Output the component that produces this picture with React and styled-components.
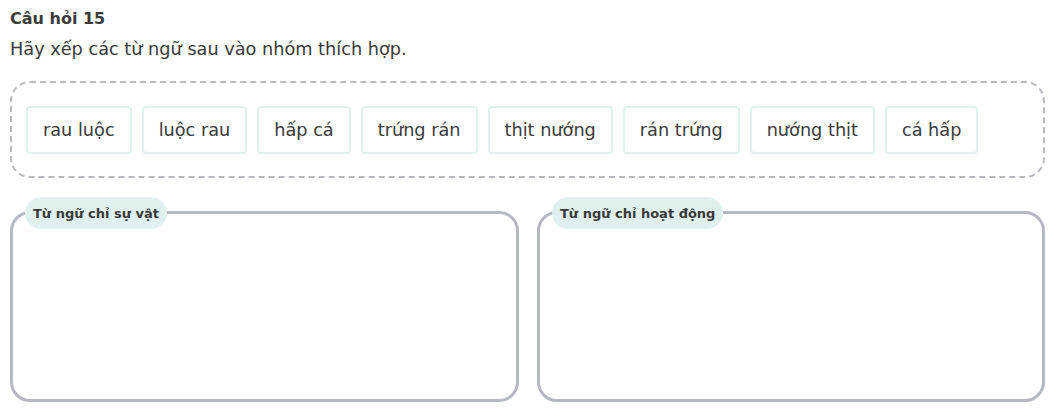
import React from 'react';
import styled, { createGlobalStyle } from 'styled-components';

const GlobalStyle = createGlobalStyle`
    body {
        margin: 0;
        background: #ffffff;
        font-family: "DejaVu Sans", Verdana, sans-serif;
        color: #333333;
    }
`

const Page = styled.div`
    padding: 9px 6px 8px 10px;
`

const Title = styled.div`
    font-weight: bold;
    font-size: 16px;
    line-height: 20px;
    color: #3a3a3a;
`

const Prompt = styled.div`
    font-size: 17.7px;
    line-height: 24px;
    margin-top: 8px;
    color: #3a3a3a;
`

const Pool = styled.div`
    margin-top: 20px;
    box-sizing: border-box;
    border: 2px dashed #b9bac1;
    border-radius: 20px;
    height: 97px;
    padding: 0 14px;
    display: flex;
    align-items: center;
    gap: 10px;
`

const Chip = styled.div`
    height: 48px;
    box-sizing: border-box;
    padding: 0 15px;
    display: flex;
    align-items: center;
    border: 2px solid #dff0ef;
    border-radius: 4px;
    font-size: 17.7px;
    color: #3a3a3a;
    background: #ffffff;
`

const Groups = styled.div`
    margin-top: 33px;
    display: grid;
    grid-template-columns: 509px 508px;
    gap: 18px;
`

const Group = styled.div`
    position: relative;
    height: 191px;
    box-sizing: border-box;
    border: 3px solid #b7b9c0;
    border-radius: 20px;
`

const Tag = styled.div`
    position: absolute;
    top: -17px;
    left: 12px;
    height: 32px;
    padding: 0 8px;
    display: flex;
    align-items: center;
    background: #dff0ef;
    border-radius: 16px;
    font-weight: bold;
    font-size: 13px;
    color: #3a3a3a;
`

const words = ['rau luộc', 'luộc rau', 'hấp cá', 'trứng rán', 'thịt nướng', 'rán trứng', 'nướng thịt', 'cá hấp']
const groups = ['Từ ngữ chỉ sự vật', 'Từ ngữ chỉ hoạt động']

const App = () => {
    return (
        <Page>
            <GlobalStyle />
            <Title>Câu hỏi 15</Title>
            <Prompt>Hãy xếp các từ ngữ sau vào nhóm thích hợp.</Prompt>
            <Pool>
                {words.map(w => <Chip key={w}>{w}</Chip>)}
            </Pool>
            <Groups>
                {groups.map(g => (
                    <Group key={g}>
                        <Tag>{g}</Tag>
                    </Group>
                ))}
            </Groups>
        </Page>
    )
}

export default App
